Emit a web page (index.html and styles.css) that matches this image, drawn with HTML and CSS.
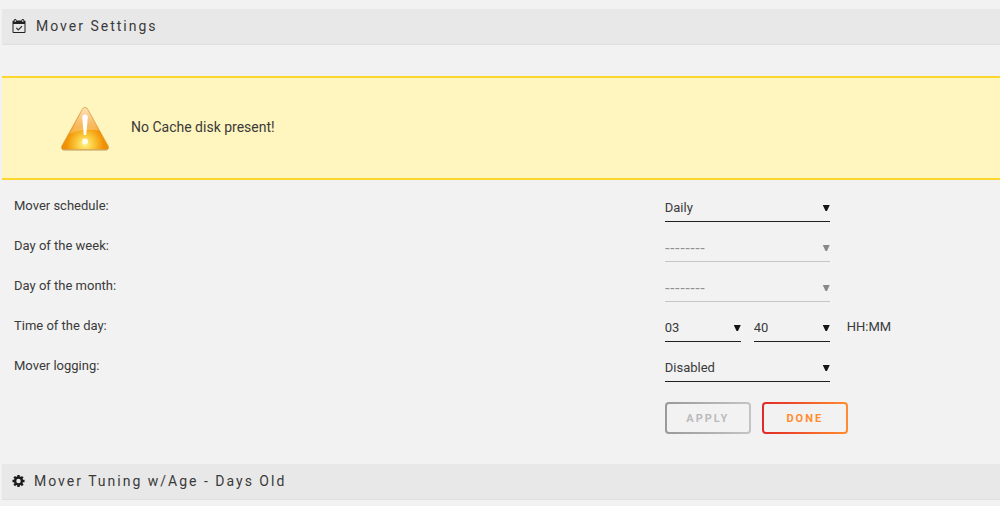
FILE: index.html
```html
<!DOCTYPE html>
<html lang="en">
<head>
<meta charset="utf-8">
<title>Mover Settings</title>
<link rel="stylesheet" href="styles.css">
</head>
<body>
<main class="page">
  <h1 class="title">
    <svg class="title-icon" viewBox="0 0 14 14" aria-hidden="true">
      <path class="solid" d="M0.500 2.500q0-1 1-1H2V1q0-1 1.200-1t1.200 1v.5h5.200V1q0-1 1.200-1T12 1v.5h.5q1 0 1 1v10.500q0 1-1 1h-11q-1 0-1-1zM1.500 5v8h11V5z" fill-rule="evenodd"/>
      <path class="slot" d="M3.200 1v2M10.800 1v2"/>
      <path class="tick" d="M4.300 8.900l2 2 3.700-3.800"/>
    </svg>
    <span>Mover Settings</span>
  </h1>

  <div class="notice" role="alert">
    <svg class="warning" viewBox="0 0 50 46" aria-hidden="true">
      <defs>
        <radialGradient id="glow" gradientUnits="userSpaceOnUse" cx="25" cy="39" r="23">
          <stop offset="0" stop-color="#fff58a"/>
          <stop offset=".4" stop-color="#fbc638"/>
          <stop offset=".8" stop-color="#f09406"/>
          <stop offset="1" stop-color="#ee8d04"/>
        </radialGradient>
        <linearGradient id="gloss" x1="0" y1="0" x2="0" y2="1">
          <stop offset="0" stop-color="#fff3df" stop-opacity=".85"/>
          <stop offset="1" stop-color="#ffd69a" stop-opacity=".35"/>
        </linearGradient>
      </defs>
      <path d="M22.500 4.500Q25 1.500 27.500 4.500L48 41.500Q49 45.500 46 45.500H4Q1 45.500 2 41.500Z" fill="#a07838" opacity=".7"/>
      <path d="M22.500 3.800Q25 .8 27.500 3.800L48.300 41Q49.500 44.500 46 44.500H4Q.5 44.500 1.700 41Z" fill="url(#glow)" stroke="#dda75a" stroke-width=".6"/>
      <path d="M22.700 4.300Q25 1.800 27.300 4.300L39 25.500Q22 23 9.500 29Z" fill="url(#gloss)"/>
      <path d="M22.200 12Q22.200 9.500 25 9.500t2.800 2.500L26.200 30H23.800Z" fill="#fff"/>
      <circle cx="25" cy="36.500" r="3" fill="#fffbe5"/>
    </svg>
    <p class="notice-text">No Cache disk present!</p>
  </div>

  <form class="form">
    <div class="row">
      <label class="label" for="schedule">Mover schedule:</label>
      <div class="controls"><span class="select"><select id="schedule"><option>Daily</option></select></span></div>
    </div>
    <div class="row">
      <label class="label" for="weekday">Day of the week:</label>
      <div class="controls"><span class="select disabled"><select id="weekday" disabled><option>--------</option></select></span></div>
    </div>
    <div class="row">
      <label class="label" for="monthday">Day of the month:</label>
      <div class="controls"><span class="select disabled"><select id="monthday" disabled><option>--------</option></select></span></div>
    </div>
    <div class="row">
      <label class="label" for="hour">Time of the day:</label>
      <div class="controls">
        <span class="select narrow"><select id="hour"><option>03</option></select></span>
        <span class="select narrow"><select aria-label="Minutes"><option>40</option></select></span>
        <span class="unit">HH:MM</span>
      </div>
    </div>
    <div class="row">
      <label class="label" for="logging">Mover logging:</label>
      <div class="controls"><span class="select"><select id="logging"><option>Disabled</option></select></span></div>
    </div>
    <div class="row actions">
      <div class="controls">
        <button class="button" type="submit" disabled>APPLY</button>
        <button class="button primary" type="button">DONE</button>
      </div>
    </div>
  </form>

  <h2 class="title compact">
    <svg class="title-icon gear" viewBox="0 0 14 14" aria-hidden="true">
      <circle cx="7" cy="7" r="3.700"/>
      <path d="M7 .5v2.700M7 10.800v2.700M.5 7h2.700M10.800 7h2.700M2.400 2.400l1.900 1.900M9.700 9.700l1.900 1.900M11.600 2.400L9.700 4.300M4.300 9.700l-1.900 1.900"/>
    </svg>
    <span>Mover Tuning w/Age - Days Old</span>
  </h2>
</main>
</body>
</html>
```
FILE: styles.css
```css
* {
  box-sizing: border-box;
}

body {
  margin: 0;
  background: #f2f2f2;
  color: #3a3a3a;
  font-family: Roboto, "Noto Sans", sans-serif;
  font-size: 13px;
  line-height: 20px;
}

.page {
  padding: 9px 0 6px 2px;
}

.title {
  display: flex;
  align-items: center;
  gap: 10px;
  height: 36px;
  margin: 0;
  padding: 0 10px 1px;
  border-bottom: 1px solid #e0e0e0;
  background: #e8e8e8;
  font-size: 14px;
  font-weight: 400;
  letter-spacing: 2px;
}

.title.compact {
  gap: 9px;
}

.title-icon {
  width: 14px;
  height: 14px;
}

.solid {
  fill: #202020;
}

.slot {
  stroke: #e8e8e8;
  stroke-width: 1;
}

.tick {
  fill: none;
  stroke: #303030;
  stroke-width: 1.3;
}

.gear {
  width: 13px;
  fill: none;
  stroke: #1c1c1c;
  stroke-width: 2.6;
}

.notice {
  display: flex;
  align-items: center;
  gap: 21px;
  height: 104px;
  margin: 31px 0 16px;
  padding: 0 58px;
  border-top: 2px solid #ffd62e;
  border-bottom: 2px solid #ffd62e;
  background: #fff5bf;
  font-size: 14px;
}

.warning {
  width: 50px;
  height: 46px;
}

.notice-text {
  margin: 0;
  padding-bottom: 2px;
}

.row {
  display: grid;
  grid-template-columns: 66% 1fr;
  height: 40px;
  padding-left: 12px;
}

.controls {
  display: flex;
  align-items: flex-start;
  gap: 13px;
  grid-column: 2;
}

.select {
  position: relative;
  width: 165px;
}

.select.narrow {
  width: 76px;
}

.select select {
  display: block;
  width: 100%;
  height: 26px;
  padding: 0 16px 2px 0;
  border: 0;
  border-bottom: 1px solid #202020;
  border-radius: 0;
  appearance: none;
  background: none;
  color: #3a3a3a;
  font: inherit;
  opacity: 1;
}

.select::after {
  position: absolute;
  top: 9px;
  right: 0;
  width: 7px;
  height: 6px;
  background: #151515;
  clip-path: polygon(0 0, 100% 0, 60% 100%, 40% 100%);
  content: "";
  pointer-events: none;
}

.select.disabled select {
  border-color: #c6c6c6;
  color: #909090;
  font-family: "DejaVu Sans", sans-serif;
  font-size: 14px;
}

.select.disabled::after {
  background: #888;
}

.unit {
  padding: 1px 0 0 4px;
}

.actions {
  height: 68px;
}

.actions .controls {
  gap: 11px;
  padding-top: 6px;
}

.button {
  width: 86px;
  height: 32px;
  padding: 1px 0 0;
  border: 2px solid transparent;
  border-radius: 4px;
  background: linear-gradient(#f2f2f2, #f2f2f2) padding-box, linear-gradient(90deg, #999, #c4c4c4) border-box;
  color: #bbb;
  font: inherit;
  font-size: 11px;
  font-weight: 700;
  letter-spacing: 2px;
}

.button.primary {
  background: linear-gradient(#f2f2f2, #f2f2f2) padding-box, linear-gradient(90deg, #e22828, #ff8c2f) border-box;
  color: #ff8c2f;
}
```
